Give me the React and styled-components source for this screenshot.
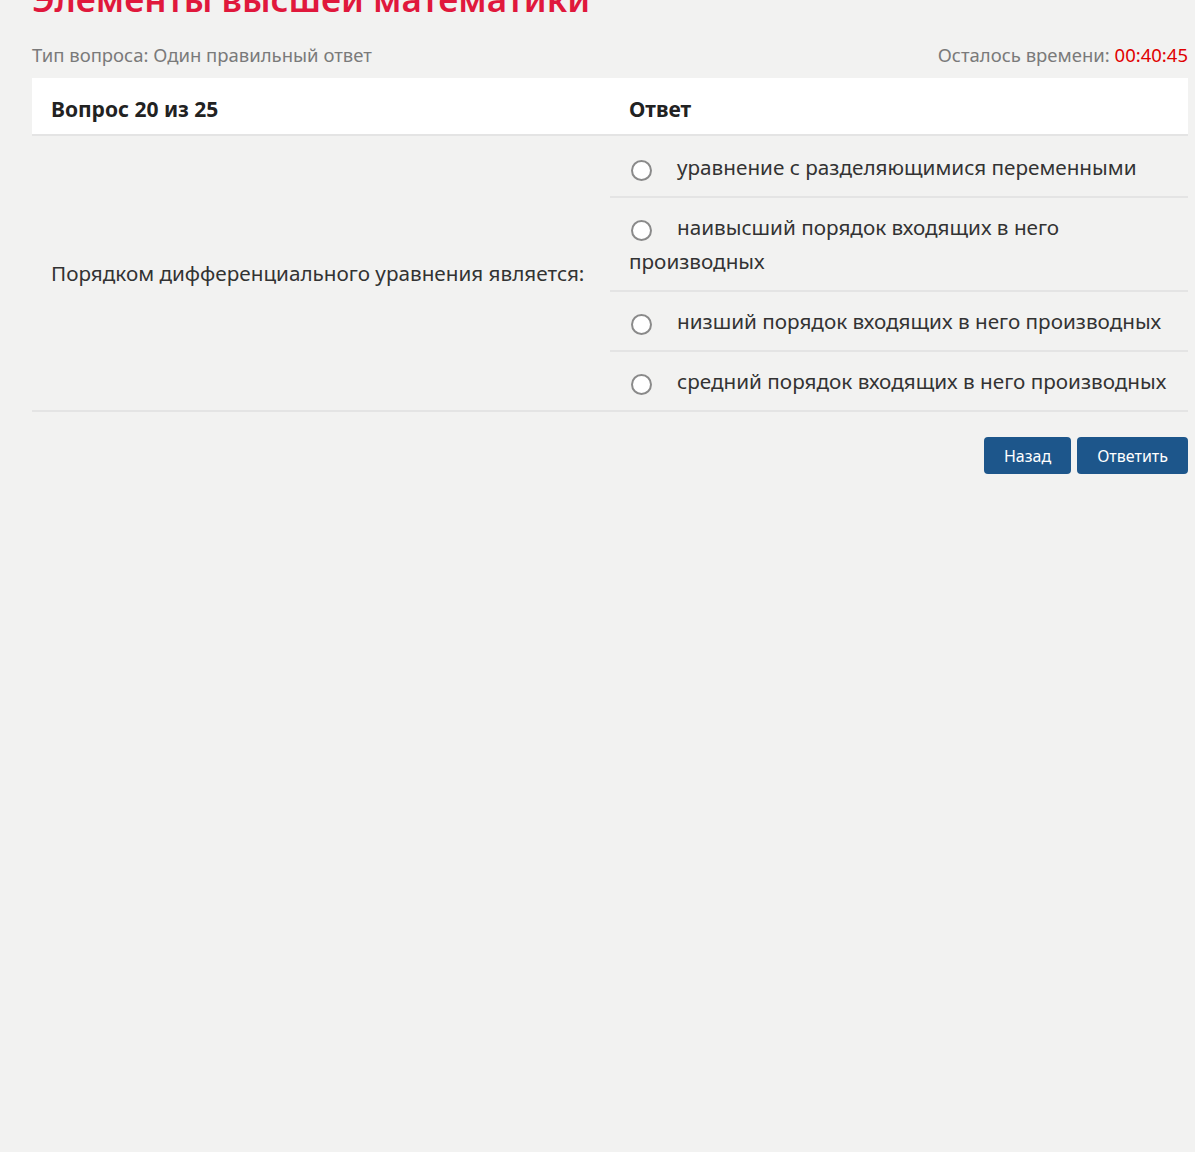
import React from "react";
import styled, { createGlobalStyle } from "styled-components";

const Global = createGlobalStyle`
  html, body { margin: 0; padding: 0; background: #f2f2f1; }
  body { font-family: "Noto Sans", "Open Sans", sans-serif; color: #333; }
  * { box-sizing: border-box; }
`;

const Page = styled.div`
  padding: 0 7px 0 32px;
  min-height: 1152px;
  overflow: hidden;
`;

const Title = styled.h1`
  margin: -24px 0 0;
  font-size: 35px;
  line-height: 46px;
  font-weight: 600;
  color: #e0183c;
  white-space: nowrap;
`;

const MetaRow = styled.div`
  display: flex;
  justify-content: space-between;
  align-items: center;
  margin-top: 20px;
  height: 24px;
  font-size: 18.5px;
  color: #7a7a7a;
`;

const Timer = styled.span`
  color: #e00000;
`;

const Table = styled.div`
  margin-top: 12px;
  display: grid;
  grid-template-columns: 578px 1fr;
`;

const HeadCell = styled.div`
  background: #fff;
  height: 58px;
  display: flex;
  align-items: center;
  padding: 5px 0 0 19px;
  font-size: 21px;
  font-weight: 700;
  color: #222;
  border-bottom: 2px solid #e4e4e4;
`;

const QuestionCell = styled.div`
  display: flex;
  align-items: center;
  padding-left: 19px;
  font-size: 20.7px;
  color: #333;
  border-bottom: 2px solid #e4e4e4;
`;

const Answers = styled.div`
  border-bottom: 2px solid #e4e4e4;
`;

const AnswerRow = styled.label`
  display: block;
  padding: ${(p) => (p.$first ? "14px 10px 12px 19px" : "12px 10px 12px 19px")};
  font-size: 20.7px;
  line-height: 34px;
  color: #333;
  border-top: ${(p) => (p.$first ? "none" : "2px solid #e4e4e4")};
  cursor: pointer;
`;

const Radio = styled.span`
  display: inline-block;
  width: 21px;
  height: 21px;
  border: 2px solid #8a8a8a;
  border-radius: 50%;
  background: #fff;
  vertical-align: -6px;
  margin: 0 25px 0 2px;
`;

const Actions = styled.div`
  display: flex;
  justify-content: flex-end;
  gap: 6px;
  margin-top: 25px;
`;

const Button = styled.button`
  height: 37px;
  padding: 0 20px;
  border: none;
  border-radius: 4px;
  background: #1d568b;
  color: #fff;
  font-family: "Noto Sans", "Open Sans", sans-serif;
  font-size: 16px;
  cursor: pointer;
`;

const answers = [
  "уравнение с разделяющимися переменными",
  "наивысший порядок входящих в него производных",
  "низший порядок входящих в него производных",
  "средний порядок входящих в него производных",
];

export default function App() {
  return (
    <>
      <Global />
      <Page>
        <Title>Элементы высшей математики</Title>
        <MetaRow>
          <span>Тип вопроса: Один правильный ответ</span>
          <span>
            Осталось времени: <Timer>00:40:45</Timer>
          </span>
        </MetaRow>
        <Table>
          <HeadCell>Вопрос 20 из 25</HeadCell>
          <HeadCell>Ответ</HeadCell>
          <QuestionCell>Порядком дифференциального уравнения является:</QuestionCell>
          <Answers>
            {answers.map((a, i) => (
              <AnswerRow key={i} $first={i === 0}>
                <Radio />
                {a}
              </AnswerRow>
            ))}
          </Answers>
        </Table>
        <Actions>
          <Button>Назад</Button>
          <Button>Ответить</Button>
        </Actions>
      </Page>
    </>
  );
}
